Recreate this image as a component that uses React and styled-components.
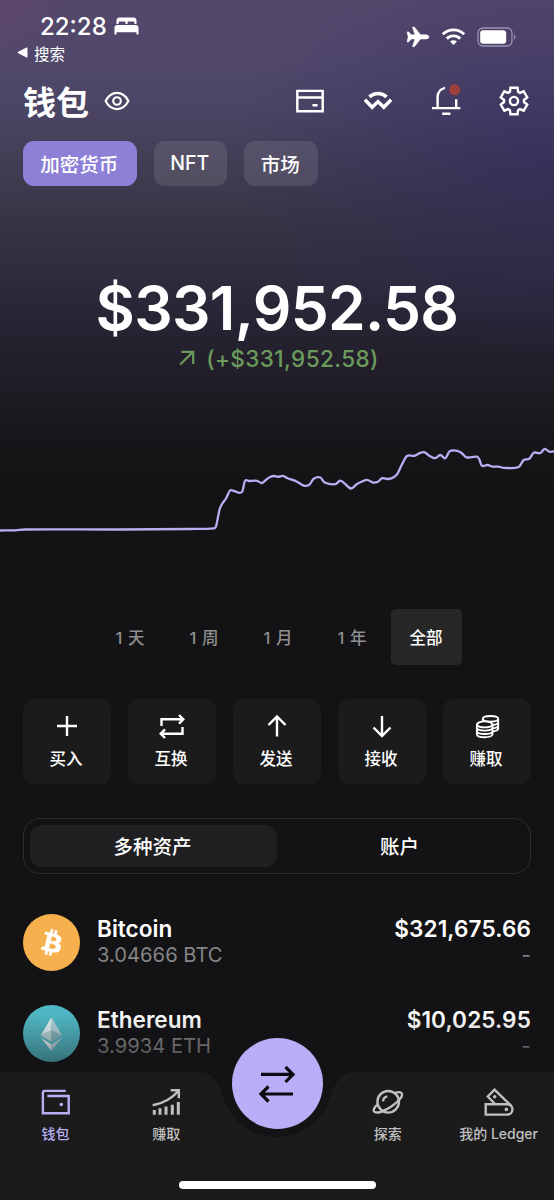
import React, { useState } from 'react'
import styled, { createGlobalStyle } from 'styled-components'

const chartPoints = [
  [0, 530.5], [15, 530.3], [25, 529.5], [120, 529.5], [190, 529], [214, 528.3], [216, 526.5],
  [218, 517], [220, 508], [223, 502.5], [226, 498.5], [230, 490.5], [234, 491], [242, 492],
  [245, 481], [249, 481], [257, 480.8], [262, 483], [267, 479], [270, 477], [274, 476],
  [278, 476.8], [283, 475.8], [287, 478], [297, 481.7], [304.3, 485.8], [309.7, 484.3],
  [313.7, 478.7], [320.3, 477.5], [324.7, 482.5], [335.3, 484.2], [340.3, 480.7], [343.7, 482.7],
  [351, 488.5], [357, 484], [367, 479.8], [372.7, 482.5], [378, 481.7], [382, 478.2],
  [388.7, 479], [393.7, 477.3], [397.7, 473.3], [402, 464.3], [407, 456], [414.3, 455.8],
  [420.3, 452.8], [424.7, 452.3], [429.7, 456], [435.3, 458.2], [440.3, 455], [445.3, 458.2],
  [449.7, 451.3], [457, 450.8], [461.3, 452.7], [466.3, 457.3], [477, 456.7], [479.3, 459.3],
  [481.7, 465.6], [487.7, 465], [492, 466.6], [498.7, 466.7], [503.7, 467.8], [518.7, 467],
  [523.7, 460], [529.3, 458.7], [533.7, 452.8], [540.3, 453], [544.7, 448.8], [549.3, 451.7],
  [556, 451],
]

// сглаживание линии графика
const linePath = (pts) => {
  let d = `M${pts[0][0]} ${pts[0][1]}`
  for (let i = 0; i < pts.length - 1; i++) {
    const p0 = pts[i - 1] || pts[i]
    const p1 = pts[i]
    const p2 = pts[i + 1]
    const p3 = pts[i + 2] || p2
    const dx = (p2[0] - p1[0]) / 3
    const s1 = p2[0] === p0[0] ? 0 : (p2[1] - p0[1]) / (p2[0] - p0[0])
    const s2 = p3[0] === p1[0] ? 0 : (p3[1] - p1[1]) / (p3[0] - p1[0])
    d += `C${p1[0] + dx} ${p1[1] + s1 * dx} ${p2[0] - dx} ${p2[1] - s2 * dx} ${p2[0]} ${p2[1]}`
  }
  return d
}

const gearPath = () => {
  const pts = []
  for (let i = 0; i < 6; i++) {
    const a = i * 60 - 90
    ;[[-24, 10], [-15, 13.7], [15, 13.7], [24, 10]].forEach(([off, r]) => {
      const rad = ((a + off) * Math.PI) / 180
      pts.push(`${(15 + r * Math.cos(rad)).toFixed(2)} ${(15 + r * Math.sin(rad)).toFixed(2)}`)
    })
  }
  return `M${pts.join('L')}Z`
}

const ranges = ['1 天', '1 周', '1 月', '1 年', '全部']

const actions = [
  { name: '买入', icon: <path d="M15 5v20M5 15h20" /> },
  {
    name: '互换',
    icon: <path d="M4.5 15V8.3H26M22 4l4.3 4.3L22 12.7M25.5 16v6.7H4M8 18.3l-4.3 4.4L8 27" />,
  },
  { name: '发送', icon: <path d="M15 25.5V5.5M6.5 14L15 5.5l8.5 8.5" /> },
  { name: '接收', icon: <path d="M15 5v20M6.500 16.500L15 25l8.500-8.500" /> },
  {
    name: '赚取',
    icon: (
      <g strokeWidth="1.9">
        <ellipse cx="12.7" cy="13.4" rx="7.8" ry="3" />
        <path d="M4.9 13.4v9.8c0 4 15.6 4 15.6 0v-9.8M4.9 16.6c0 4 15.6 4 15.6 0M4.9 20c0 4 15.6 4 15.6 0" />
        <path d="M10.8 10.2V7.8c0-3.8 15.4-3.8 15.4 0v9.8c0 1.6-2.4 2.6-5.4 2.9M10.8 7.8c0 3.8 15.4 3.8 15.4 0M26.2 11c0 1.8-2.4 2.8-5.5 3M26.2 14.4c0 1.7-2.4 2.6-5.4 2.9" />
      </g>
    ),
  },
]

const BtcLogo = () => (
  <svg width="43" height="43" viewBox="0 0 32 32" fill="#fff" stroke="#fff" strokeWidth="0.3">
    <path d="M23.189 14.02c.314-2.096-1.283-3.223-3.465-3.975l.708-2.84-1.728-.43-.69 2.765c-.454-.114-.92-.22-1.385-.326l.695-2.783L15.596 6l-.708 2.839c-.376-.086-.746-.17-1.104-.26l.002-.009-2.384-.595-.46 1.846s1.283.294 1.256.312c.7.175.826.638.805 1.006l-.806 3.235c.048.012.11.03.18.057l-.183-.045-1.13 4.532c-.086.212-.303.531-.793.41.018.025-1.256-.313-1.256-.313l-.858 1.978 2.25.561c.418.105.828.215 1.231.318l-.715 2.872 1.727.43.708-2.84c.472.127.93.245 1.378.357l-.706 2.828 1.728.43.715-2.866c2.948.558 5.164.333 6.097-2.333.752-2.146-.037-3.385-1.588-4.192 1.13-.26 1.98-1.003 2.207-2.538zm-3.95 5.538c-.533 2.147-4.148.986-5.32.695l.95-3.805c1.172.293 4.929.872 4.37 3.11zm.535-5.569c-.487 1.953-3.495.96-4.47.717l.86-3.45c.975.243 4.118.696 3.61 2.733z" />
  </svg>
)

const EthLogo = () => (
  <svg width="57" height="57" viewBox="0 0 57 57">
    <path d="M28.4 12.2L17.8 30.2l10.6-4.6z" fill="#e4f2f4" />
    <path d="M28.4 12.2L39 30.2l-10.6-4.6z" fill="#b4d3d8" />
    <path d="M17.8 30.2l10.6-4.6V37z" fill="#b9d6da" />
    <path d="M39 30.2l-10.6-4.6V37z" fill="#86b4bc" />
    <path d="M17.8 32.8l10.6 6.4v6.6z" fill="#e9f5f6" />
    <path d="M39 32.8l-10.6 6.4v6.6z" fill="#b4d3d8" />
  </svg>
)

const coins = [
  { name: 'Bitcoin', amount: '3.04666 BTC', value: '$321,675.66', logo: <BtcLogo />, bg: '#f6b04e' },
  { name: 'Ethereum', amount: '3.9934 ETH', value: '$10,025.95', logo: <EthLogo />, bg: '#4fb6c3' },
]

const navLeft = [
  {
    name: '钱包',
    active: true,
    icon: (
      <>
        <path d="M25.7 3.9H4.9c-1.3 0-2 .7-2 2v20.4h25.8V9H7.3" />
        <circle cx="21.3" cy="17.5" r="1.8" fill="currentColor" stroke="none" />
      </>
    ),
  },
  {
    name: '赚取',
    icon: (
      <>
        <path d="M1.7 18.3C12 16.5 20.5 12 27.6 3.8M19.7 3.2h8.1v8.1" />
        <path d="M3.3 23v4.7M9 21.3v6.4M15 19.5v8.2M21.3 17.7v10M27.3 15v12.7" strokeWidth="3" />
      </>
    ),
  },
]

const navRight = [
  {
    name: '探索',
    icon: (
      <>
        <circle cx="15.2" cy="14.8" r="10.8" />
        <path d="M4.6 17.4C1 20.600-.2 23.200 1.300 24.700c2.700 2.300 10.400-.8 17.400-5.500 7-4.800 11.700-10.300 10-12.900-1.100-1.500-4.200-1.300-7.700 0" />
        <path d="M10 14.400c.2-2.600 1.800-4.400 4.300-5" />
      </>
    ),
  },
  {
    name: '我的 Ledger',
    icon: (
      <>
        <path d="M1.700 17.200h21.500a5.200 5.200 0 0 1 0 10.400H1.700z" />
        <path d="M11 17L3.800 9.500 10.500 2.600l16.200 15.800" />
        <circle cx="22.400" cy="22.400" r="1.800" fill="currentColor" stroke="none" />
        <circle cx="10.700" cy="9.800" r="1.800" fill="currentColor" stroke="none" />
      </>
    ),
  },
]

const NavButton = ({ item }) => (
  <NavItem $active={item.active}>
    <LineIcon viewBox="0 0 30 30">{item.icon}</LineIcon>
    <span>{item.name}</span>
  </NavItem>
)

const App = () => {
  const [range, setRange] = useState('全部')

  return (
    <Screen>
      <GlobalStyle />
      <StatusBar>
        <StatusLeft>
          <Time>
            22:28
            <svg width="25" height="18" viewBox="0 0 25 18" fill="#fff">
              <path d="M2.500 7V3.500C2.500 1.500 3.700.5 5.500.5h14c1.800 0 3 1 3 3V7h-2V5.800c0-.9-.5-1.400-1.400-1.400h-4.200c-.9 0-1.400.5-1.400 1.400V7h-2V5.800c0-.9-.5-1.400-1.400-1.400H6c-.9 0-1.400.5-1.400 1.400V7z" />
              <path d="M.5 17.500v-6.700C.5 9 1.500 8 3.300 8h18.400c1.800 0 2.800 1 2.800 2.800v6.700h-2v-2.300h-20v2.300z" />
            </svg>
          </Time>
          <Back>
            <svg width="11" height="11" viewBox="0 0 11 11" fill="#fff">
              <path d="M.8 5.500L10 .8v9.400z" stroke="#fff" strokeLinejoin="round" />
            </svg>
            搜索
          </Back>
        </StatusLeft>
        <StatusRight>
          <svg width="24" height="22" viewBox="0 0 24 22" fill="#fff">
            <path d="M14.500 8.800h5.300c1.700 0 3.200 1 3.200 2.100s-1.500 2.100-3.200 2.100h-5.300L8.800 20.300c-.2.300-.5.400-.8.400H6.400l2.600-7.700H5.100l-2 2.500c-.2.300-.5.400-.8.400H1l1.200-5L1 5.900h1.300c.3 0 .6.100.8.400l2 2.500H9L6.400 1.100H8c.3 0 .6.100.8.400z" stroke="#fff" strokeWidth="0.5" />
          </svg>
          <svg width="25" height="19" viewBox="0 0 25 19" fill="none" stroke="#fff" strokeWidth="2.900">
            <path d="M1.800 7.300c6-5.900 15.400-5.900 21.400 0" />
            <path d="M5.800 11.600c3.800-3.700 9.600-3.700 13.400 0" />
            <path d="M12.500 18l-3.400-3.500c1.900-1.700 4.900-1.700 6.800 0z" fill="#fff" stroke="none" />
          </svg>
          <svg width="40" height="20" viewBox="0 0 40 20">
            <rect x="1" y="1" width="34" height="18" rx="5" fill="none" stroke="#9a91ae" strokeWidth="1.300" />
            <rect x="3.200" y="3.200" width="26" height="13.600" rx="3" fill="#fff" />
            <path d="M37 7.300c1.900.8 1.900 4.600 0 5.400z" fill="#9a91ae" />
          </svg>
        </StatusRight>
      </StatusBar>

      <Header>
        <Title>钱包</Title>
        <EyeIcon viewBox="0 0 26 20">
          <path d="M1.600 10C4.200 5 8.200 1.900 13 1.900S21.800 5 24.400 10C21.800 15 17.800 18.100 13 18.100S4.200 15 1.600 10z" />
          <circle cx="13" cy="10" r="3.800" />
        </EyeIcon>
        <HeaderIcons>
          <LineIcon viewBox="0 0 30 30">
            <path d="M2.300 4.900h25.400v20.400H2.300zM2.300 11.500h25.400M17.500 19.200h5" />
          </LineIcon>
          <LineIcon viewBox="0 0 30 30">
            <path d="M1.900 13.800l7.300 7.400 5.800-5.600 5.800 5.600 7.300-7.400M6.400 10.900c5-4.600 12.200-4.600 17.200 0" strokeWidth="3.500" />
          </LineIcon>
          <LineIcon viewBox="0 0 30 30">
            <path d="M1 22.100h28.400M6.600 22V11.500C6.600 6.600 9.200 3 14 1.900M25.200 13.200V22M11.200 27.700h8.200" />
            <circle cx="23.700" cy="3.700" r="5.600" fill="#9c403b" stroke="none" />
          </LineIcon>
          <LineIcon viewBox="0 0 30 30">
            <path d={gearPath()} />
            <circle cx="15" cy="15" r="4.100" />
          </LineIcon>
        </HeaderIcons>
      </Header>

      <Tabs>
        <Tab $active $width={113.5}>加密货币</Tab>
        <Tab $width={73.5}>NFT</Tab>
        <Tab $width={73.5}>市场</Tab>
      </Tabs>

      <Balance>$331,952.58</Balance>
      <Profit>
        <svg width="16" height="16" viewBox="0 0 16 16" fill="none" stroke="currentColor" strokeWidth="2.200">
          <path d="M1.200 14.500L14 1.900M2.500 1.900h11.700v12" />
        </svg>
        (+$331,952.58)
      </Profit>

      <Chart viewBox="0 440 554 100">
        <path d={linePath(chartPoints)} />
      </Chart>

      <Ranges>
        {ranges.map(name => (
          <Range key={name} $active={name === range} onClick={() => setRange(name)}>{name}</Range>
        ))}
      </Ranges>

      <Actions>
        {actions.map(action => (
          <Action key={action.name}>
            <LineIcon viewBox="0 0 30 30">{action.icon}</LineIcon>
            <span>{action.name}</span>
          </Action>
        ))}
      </Actions>

      <Switcher>
        <SwitchItem $active>多种资产</SwitchItem>
        <SwitchItem>账户</SwitchItem>
      </Switcher>

      <CoinList>
        {coins.map(coin => (
          <Coin key={coin.name}>
            <CoinLogo $bg={coin.bg}>{coin.logo}</CoinLogo>
            <CoinCol>
              <CoinName>{coin.name}</CoinName>
              <CoinSub>{coin.amount}</CoinSub>
            </CoinCol>
            <CoinCol $right>
              <CoinName>{coin.value}</CoinName>
              <CoinSub>-</CoinSub>
            </CoinCol>
          </Coin>
        ))}
      </CoinList>

      <Bottom>
        <Fade />
        <NavBar>
          {navLeft.map(item => <NavButton key={item.name} item={item} />)}
          <NavGap />
          {navRight.map(item => <NavButton key={item.name} item={item} />)}
        </NavBar>
        <Transfer>
          <svg width="40" height="40" viewBox="0 0 40 40" fill="none" stroke="#0c0b10" strokeWidth="3.200">
            <path d="M4 10.400h32M28.500 3l7.500 7.400-7.500 7.600M36 30H4M11.500 22.500L4 30l7.500 7.500" />
          </svg>
        </Transfer>
        <HomeBar />
      </Bottom>
    </Screen>
  )
}

const GlobalStyle = createGlobalStyle`
  * {
    box-sizing: border-box;
  }
  body {
    margin: 0;
    background: #131214;
    font-family: Inter, "Noto Sans CJK SC", sans-serif;
    color: #fff;
  }
  button {
    font-family: inherit;
    color: inherit;
    border: none;
    padding: 0;
    cursor: pointer;
  }
`
const Screen = styled.div`
  position: relative;
  display: flex;
  flex-direction: column;
  width: 554px;
  height: 1200px;
  overflow: hidden;
  background:
    radial-gradient(circle 70px at 0 0, rgba(105, 68, 105, 0.45), transparent),
    radial-gradient(ellipse 330px 200px at 100% 160px, rgba(44, 35, 95, 0.5), rgba(44, 35, 95, 0)),
    linear-gradient(
      180deg,
      #53476b 0,
      #51486b 60px,
      #4b4564 110px,
      #413c52 170px,
      #383343 225px,
      #2f2b3d 280px,
      #282434 320px,
      #221f2a 365px,
      #1c1a20 410px,
      #161417 455px,
      #131214 490px
    );
`
const StatusBar = styled.div`
  display: flex;
  justify-content: space-between;
  height: 70px;
  padding: 11px 37px 0 17px;
`
const StatusLeft = styled.div`
  display: flex;
  flex-direction: column;
`
const Time = styled.div`
  display: flex;
  align-items: center;
  gap: 7px;
  height: 30px;
  padding-left: 23px;
  font-size: 24px;
  font-weight: 500;
`
const Back = styled.div`
  display: flex;
  align-items: center;
  gap: 6px;
  height: 23px;
  font-size: 15.5px;
  font-weight: 400;
`
const StatusRight = styled.div`
  display: flex;
  align-items: center;
  gap: 11px;
  height: 51px;
`
const Header = styled.div`
  display: flex;
  align-items: center;
  height: 62px;
  padding: 0 25px 0 23px;
`
const Title = styled.div`
  padding-top: 4px;
  font-size: 33px;
  font-weight: 600;
  line-height: 48px;
`
const LineIcon = styled.svg`
  display: block;
  flex: none;
  width: 30px;
  height: 30px;
  overflow: visible;
  fill: none;
  stroke: currentColor;
  stroke-width: 2.4px;
`
const EyeIcon = styled(LineIcon)`
  width: 26px;
  height: 20px;
  margin-left: 15px;
  stroke-width: 2.1px;
`
const HeaderIcons = styled.div`
  display: flex;
  gap: 38px;
  margin-left: auto;
`
const Tabs = styled.div`
  display: flex;
  gap: 17px;
  height: 45px;
  margin: 9px 23px 0;
`
const Tab = styled.button`
  width: ${props => props.$width}px;
  padding: 0 1px 1px 0;
  border-radius: 11px;
  background: ${props => props.$active ? '#8d80d6' : 'rgba(255, 255, 255, 0.1)'};
  font-size: 19.5px;
  font-weight: 500;
`
const Balance = styled.div`
  margin-top: 84px;
  height: 76px;
  line-height: 76px;
  text-align: center;
  font-size: 60.5px;
  font-weight: 600;
  letter-spacing: -0.7px;
`
const Profit = styled.div`
  display: flex;
  align-items: center;
  justify-content: center;
  gap: 11px;
  height: 26px;
  padding: 0 0 2px 4px;
  color: #6a9a5c;
  font-size: 22.5px;
  font-weight: 500;
  letter-spacing: 0.4px;
`
const Chart = styled.svg`
  display: block;
  flex: none;
  width: 554px;
  height: 100px;
  margin-top: 68px;
  fill: none;
  stroke: #b9aef3;
  stroke-width: 2.3px;
  stroke-linejoin: round;
`
const Ranges = styled.div`
  display: flex;
  justify-content: center;
  gap: 3px;
  margin: 69px 0 0 2px;
  height: 56px;
`
const Range = styled.button`
  width: 71px;
  border-radius: 5px;
  background: ${props => props.$active ? '#272728' : 'none'};
  color: ${props => props.$active ? '#fff' : '#8f8f90'};
  font-size: 16.5px;
  font-weight: 500;
  word-spacing: 1.5px;
`
const Actions = styled.div`
  display: flex;
  gap: 17px;
  margin: 34px 23px 0;
`
const Action = styled.button`
  display: flex;
  flex: 1;
  flex-direction: column;
  align-items: center;
  height: 85px;
  padding-top: 12px;
  border-radius: 11px;
  background: #1b1b1c;
  font-size: 16.5px;
  font-weight: 500;
  line-height: 24px;
  span {
    margin: 6px 2px 0 0;
  }
`
const Switcher = styled.div`
  display: flex;
  height: 56px;
  margin: 34px 23px 0;
  padding: 6px;
  border: 1px solid #2d2d2f;
  border-radius: 17px;
`
const SwitchItem = styled.button`
  flex: 1;
  padding: 0 2px 2px 0;
  border-radius: 12px;
  background: ${props => props.$active ? '#202022' : 'none'};
  font-size: 19.5px;
  font-weight: 500;
`
const CoinList = styled.div`
  display: flex;
  flex-direction: column;
  gap: 34px;
  margin: 40px 23px 0;
`
const Coin = styled.div`
  display: flex;
  align-items: center;
  height: 57px;
`
const CoinLogo = styled.div`
  display: flex;
  align-items: center;
  justify-content: center;
  width: 57px;
  height: 57px;
  margin-right: 17px;
  border-radius: 50%;
  background: ${props => props.$bg};
`
const CoinCol = styled.div`
  display: flex;
  flex-direction: column;
  padding-bottom: 4px;
  ${props => props.$right && 'margin-left: auto; align-items: flex-end; letter-spacing: 0.1px;'}
`
const CoinName = styled.div`
  font-size: 22.6px;
  font-weight: 600;
  line-height: 27px;
`
const CoinSub = styled.div`
  color: #858586;
  font-size: 20.2px;
  line-height: 25px;
`
const Bottom = styled.div`
  position: absolute;
  left: 0;
  right: 0;
  bottom: 0;
`
const Fade = styled.div`
  height: 58px;
  background: linear-gradient(180deg, rgba(19, 18, 20, 0), rgba(19, 18, 20, 0.5));
`
const NavBar = styled.div`
  display: grid;
  grid-template-columns: repeat(5, 1fr);
  align-items: start;
  height: 128px;
  padding-top: 15px;
  background: #1b1b1b;
  clip-path: path('M0 0H198C211 0 218 7 223 24A56 56 0 0 0 331 24C336 7 343 0 356 0H554V128H0Z');
`
const NavGap = styled.div`
  height: 30px;
`
const NavItem = styled.button`
  display: flex;
  flex-direction: column;
  align-items: center;
  gap: 7px;
  background: none;
  color: ${props => props.$active ? '#b9aef3' : '#c0c0c0'};
  font-size: 14px;
  font-weight: 500;
  line-height: 20px;
  white-space: nowrap;
`
const Transfer = styled.button`
  position: absolute;
  left: 231.5px;
  bottom: 71px;
  display: flex;
  align-items: center;
  justify-content: center;
  width: 91px;
  height: 91px;
  border-radius: 50%;
  background: #b9aef8;
`
const HomeBar = styled.div`
  position: absolute;
  left: 179px;
  bottom: 11px;
  width: 197px;
  height: 8px;
  border-radius: 4px;
  background: #fff;
`

export default App
